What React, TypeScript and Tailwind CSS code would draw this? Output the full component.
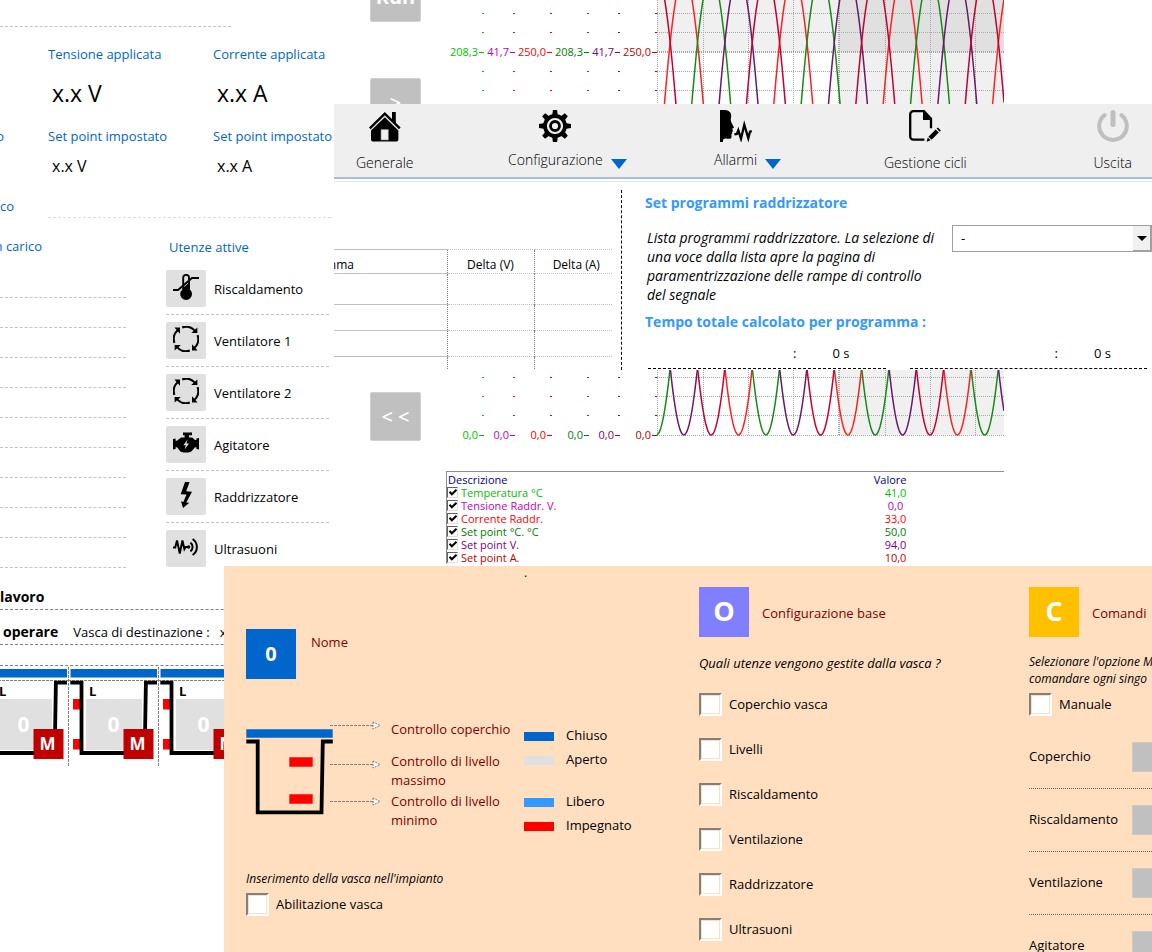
import type { ReactNode } from 'react'

/* ---------- icons ---------- */

function ThermometerIcon() {
  return (
    <svg width="26" height="26" viewBox="0 0 26 26">
      <path d="M10.2 15V3.8a2.8 2.8 0 0 1 5.8 0V15" fill="none" stroke="#000" strokeWidth="1.9" />
      <path d="M9.4 14.5 16.8 8v7.4a5.9 5.9 0 1 1-7.4 0z" />
      <path d="M0 16h5L19 4h7" fill="none" stroke="#000" strokeWidth="1.9" />
    </svg>
  )
}

function FanIcon() {
  return (
    <svg width="26" height="26" viewBox="0 0 26 26">
      {[0, 90, 180, 270].map((angle) => (
        <g key={angle} transform={`rotate(${angle} 13 13)`}>
          <path d="M9.2 1.4a12 12 0 0 1 12.6 3.2" fill="none" stroke="#000" strokeWidth="2.1" />
          <path d="M24.4 1.4v5.6h-6.2z" />
        </g>
      ))}
    </svg>
  )
}

function EngineIcon() {
  return (
    <svg width="26" height="26" viewBox="0 0 26 26">
      <path d="M10 2.5h9v2.8h-3v2.2h3.2l2.8 2.6h1.4V8.5L26 8v11.5l-2.6-.6v-1.6H22l-3.6 4.2-3 1h-5l-3-1L4 17.3H2.6v1.6L0 19.5V9l2.6-.5v2.2H4l4-3.2h3.6V5.3H10z" />
      <path d="m14.6 9.6-4.2 5.6h2.4l-1.2 4.2 4.4-5.8h-2.5z" fill="#e0e0e0" />
    </svg>
  )
}

function BoltIcon() {
  return (
    <svg width="26" height="26" viewBox="0 0 26 26">
      <path d="M12 0h4.6L13.2 9.3l5.8.4-5.7 10.7 3 .3L10 26 8 19.3l2.3.7 3.2-7.4-5.8-.4z" />
    </svg>
  )
}

function UltrasoundIcon() {
  return (
    <svg width="26" height="26" viewBox="0 0 26 26" fill="none" stroke="#000" strokeWidth="2">
      <path d="M0 13.5h2.2L4 6.5l2.8 13 2.6-13 2 8.5 1.2-2h3.2" />
      <circle cx="15.6" cy="13" r="1.7" fill="#000" stroke="none" />
      <path d="M17.4 8.6a5.5 5.5 0 0 1 0 8.8" />
      <path d="M19.6 5a9.6 9.6 0 0 1 0 16" />
    </svg>
  )
}

function HouseIcon() {
  return (
    <svg width="32" height="32" viewBox="0 0 32 32">
      <path d="M23 2h3.8v13L23 11z" />
      <path d="M.8 18.3 15.8 3.6l15 14.7" fill="none" stroke="#000" strokeWidth="2.4" />
      <path d="M15.8 7.2 29.4 20.4V29a2.6 2.6 0 0 1-2.6 2.6H4.6A2.6 2.6 0 0 1 2 29v-8.6z" />
      <path d="M12 19.5h7.4V30H12z" fill="#efefef" stroke="#888" strokeWidth="0.6" />
    </svg>
  )
}

function GearIcon() {
  return (
    <svg width="32" height="32" viewBox="0 0 32 32">
      {[0, 45, 90, 135, 180, 225, 270, 315].map((angle) => (
        <path key={angle} d="M13.9 0h4.2l.8 6h-5.8z" transform={`rotate(${angle} 16 16)`} />
      ))}
      <circle cx="16" cy="16" r="10" fill="none" stroke="#000" strokeWidth="3.8" />
      <circle cx="16" cy="16" r="4.5" fill="none" stroke="#000" strokeWidth="2.8" />
    </svg>
  )
}

function VoiceIcon() {
  return (
    <svg width="32" height="32" viewBox="0 0 32 32">
      <path d="M0 0h4.5c3.6.2 6 1.4 6.6 4.6.4 2-.6 3.8-.3 6 .2 1.6 1.4 3.8 3 6.4.3.7-.4 1.3-1.6 1.6l.8 2.6-1.2.8.6 1.2-1 .9.1 2.6c-.1 2-1.6 2.4-4.4 2-2-.3-3.6.2-4 1.4L2.8 32H0z" />
      <path d="m14.4 24.4 2.5-.5 1.4-3.6 2.7 8.4 3.3-14 4 13.6 1.7-6.6 1.8-.6" fill="none" stroke="#000" strokeWidth="2.3" />
    </svg>
  )
}

function CycleFileIcon() {
  return (
    <svg width="32" height="32" viewBox="0 0 32 32">
      <path d="M15.4 29.7H4.4A3.2 3.2 0 0 1 1.2 26.5V4.4a3.2 3.2 0 0 1 3.2-3.2H15l7 7.4v9.6" fill="none" stroke="#000" strokeWidth="2.3" />
      <path d="M14 .8 23 10h-9z" />
      <path d="m27.6 18.6 1.3-1.1 3 3-1.2 1.2zM26.7 19.6l3.1 3-7.2 7.1-3.2-3zM18.8 27.5l2.8 2.8-4 1.5z" />
    </svg>
  )
}

function PowerIcon() {
  return (
    <svg width="32" height="32" viewBox="0 0 32 32" fill="none" stroke="#bfbfbf" strokeLinecap="round">
      <path d="M7.6 5.2a13.8 13.8 0 1 0 16.8 0" strokeWidth="4" />
      <path d="M16 2.6v12" strokeWidth="5" />
    </svg>
  )
}

function ArrowDown() {
  return (
    <svg width="16" height="10" viewBox="0 0 16 10">
      <path d="M0 0h16L8 10z" fill="#0066cc" />
    </svg>
  )
}

/* ---------- plant overview (left) ---------- */

const utilities = [
  { label: 'Riscaldamento', icon: <ThermometerIcon /> },
  { label: 'Ventilatore 1', icon: <FanIcon /> },
  { label: 'Ventilatore 2', icon: <FanIcon /> },
  { label: 'Agitatore', icon: <EngineIcon /> },
  { label: 'Raddrizzatore', icon: <BoltIcon /> },
  { label: 'Ultrasuoni', icon: <UltrasoundIcon /> },
]

function Measure({ title, unit }: { title: string; unit: string }) {
  return (
    <div className="w-[165px] shrink-0 pt-[17px] whitespace-nowrap">
      <div className="leading-5 text-[#0066cc]">{title}</div>
      <div className="mt-[13px] pl-1 text-[23px] leading-8">x.x {unit}</div>
      <div className="mt-[17px] leading-5 text-[#0066cc]">Set point impostato</div>
      <div className="mt-2.5 pl-1 text-base leading-5">x.x {unit}</div>
    </div>
  )
}

function MiniTank() {
  return (
    <svg className="shrink-0" width="90" height="100" viewBox="0 0 90 100">
      <path d="M0 14.5h90" stroke="#808080" strokeDasharray="3 1" />
      <path d="M.5 1v99" stroke="#808080" strokeDasharray="3 1" />
      <path d="M2.5 3h86.5v8.5H2.5z" fill="#0066cc" />
      <path d="M5 33h7v10.5H5zM5 73h7v10.5H5z" fill="#ff0000" />
      <path d="M18 33h56v51H18z" fill="#e0e0e0" />
      <path d="M2.3 16.6h11.2V87h63.2l1.2-70.4H89" fill="none" stroke="#000" strokeWidth="3.8" />
      <text x="21" y="30" fontSize="13" fontWeight="700">L</text>
      <text x="45.5" y="66" fontSize="21" fontWeight="700" fill="#fff" textAnchor="middle">0</text>
      <path d="M55.5 63h30v30h-30z" fill="#c00000" />
      <text x="69.5" y="84" fontSize="17" fontWeight="700" fill="#fff" textAnchor="middle">M</text>
    </svg>
  )
}

function OverviewWindow() {
  return (
    <section className="absolute left-0 top-0 bottom-0 w-[334px] overflow-hidden bg-white">
      <div className="h-[27px] w-[231px] border-b border-dashed border-[#c4c4c4]" />

      <div className="flex h-[191px]">
        <div className="w-12 shrink-0 text-[#0066cc] leading-5">
          <div className="w-1 pt-[99px] flex justify-end">o</div>
          <div className="pt-[50px]">co</div>
        </div>
        <div className="flex w-[283px] border-b border-dashed border-[#dcdcdc]">
          <Measure title="Tensione applicata" unit="V" />
          <Measure title="Corrente applicata" unit="A" />
        </div>
      </div>

      <div className="flex h-[350px] gap-10">
        <div className="w-[126px] pt-[18px]">
          <div className="flex w-[42px] justify-end whitespace-nowrap leading-5 text-[#0066cc]">n carico</div>
          <div className="h-[42px] border-b border-dashed border-[#c4c4c4]" />
          {Array.from({ length: 9 }, (_, i) => (
            <div key={i} className="h-[30px] border-b border-dashed border-[#c4c4c4]" />
          ))}
        </div>
        <div className="w-[163px] pt-[19px]">
          <h2 className="pl-[3px] leading-5 text-[#0066cc]">Utenze attive</h2>
          <ul className="pt-1.5">
            {utilities.map((u) => (
              <li key={u.label} className="group flex h-[52px] flex-col pt-[7px]">
                <div className="flex items-center gap-2">
                  <span className="flex h-[37px] w-10 items-center justify-center rounded-xs bg-[#e0e0e0] pb-1">{u.icon}</span>
                  <span className="pt-0.5">{u.label}</span>
                </div>
                <div className="mt-[7px] border-b border-dashed border-[#c4c4c4] group-last:hidden" />
              </li>
            ))}
          </ul>
        </div>
      </div>

      <div className="flex h-[42px] items-end border-b border-dashed border-[#808080] pb-0.5 text-sm font-bold leading-5">
        lavoro
      </div>
      <div className="flex h-[35px] items-end border-b border-dashed border-[#808080] pb-0.5 pl-[3px] leading-5">
        <b className="text-sm leading-5">operare</b>
        <span className="ml-[15px]">Vasca di destinazione :</span>
        <span className="ml-2.5">x</span>
      </div>
      <div className="h-[21px] border-b border-dashed border-[#808080]" />
      <div className="flex w-[248px] justify-end">
        <MiniTank />
        <MiniTank />
        <MiniTank />
      </div>
    </section>
  )
}

/* ---------- trend (top right) ---------- */

const series = [
  { name: 'Temperatura °C', value: '41,0', max: '208,3', axis: 38, color: '#00c000' },
  { name: 'Tensione Raddr. V.', value: '0,0', max: '41,7', axis: 69, color: '#c000c0' },
  { name: 'Corrente Raddr.', value: '33,0', max: '250,0', axis: 106, color: '#ff0000' },
  { name: 'Set point °C. °C', value: '50,0', max: '208,3', axis: 143, color: '#008000' },
  { name: 'Set point V.', value: '94,0', max: '41,7', axis: 174, color: '#800080' },
  { name: 'Set point A.', value: '10,0', max: '250,0', axis: 211, color: '#c00000' },
]

const PLOT_LEFT = 211
const PLOT_RIGHT = 558
const BASELINE = 435
const AMPLITUDE = 230
const PHASE = 27.35

const waves = [
  { color: '#ff2020', offset: 3 },
  { color: '#158a15', offset: 0 },
  { color: '#6a1868', offset: 1 },
  { color: '#c40030', offset: 2 },
]

function wavePoints(offset: number) {
  const points: string[] = []
  for (let x = PLOT_LEFT; x <= PLOT_RIGHT; x++) {
    const angle = ((x - PLOT_LEFT - offset * PHASE + 0.5) / (PHASE * 4)) * Math.PI * 2
    points.push(`${x},${(BASELINE - AMPLITUDE * (1 - Math.cos(angle))).toFixed(1)}`)
  }
  return points.join(' ')
}

// 20 divisions between 0 and the full scale, the two labelled ones left out
const minorTicks = Array.from({ length: 23 }, (_, i) => i)
  .filter((i) => i % 20 !== 0)
  .map((i) => Math.floor(434.9 - i * 19.15))

function TrendChart() {
  return (
    <svg width="558" height="441" viewBox="0 0 558 441">
      <path d="M211 0h182v52H211z" fill="#f0f0f0" />
      <path d="M393 0h165v52H393z" fill="#e0e0e0" />
      <path d="M393 52h165v383H393z" fill="#f0f0f0" />
      <g stroke="#a8a8a8" strokeDasharray="1 1">
        {[211.5, 257.5, 302.5, 347.5, 392.5, 393.5, 439.5, 484.5, 529.5].map((x) => (
          <path key={x} d={`M${x} 0V435`} />
        ))}
        {[...minorTicks, 51, 52, 435].map((y) => (
          <path key={y} d={`M211 ${y}.5H558`} />
        ))}
      </g>
      {waves.map((w) => (
        <polyline key={w.color} points={wavePoints(w.offset)} fill="none" stroke={w.color} strokeWidth="1.5" />
      ))}
      {series.map((s) => (
        <g key={s.name} fill={s.color} fontSize="11" textAnchor="end">
          {minorTicks.map((y) => (
            <path key={y} d={`M${s.axis - 2} ${y}h2v1h-2z`} />
          ))}
          <path d={`M${s.axis - 5} 52h5v1h-5zM${s.axis - 5} 435h5v1h-5z`} />
          <text x={s.axis - 6} y="56">{s.max}</text>
          <text x={s.axis - 6} y="439">0,0</text>
        </g>
      ))}
    </svg>
  )
}

function Legend() {
  return (
    <table className="mt-[30px] w-full border-collapse border-l border-t border-[#909090] text-[11px] leading-[13px]">
      <thead>
        <tr className="text-[#000080]">
          <th className="w-[420px] p-0 pt-px pl-px text-left font-normal">Descrizione</th>
          <th className="w-[40px] p-0 pt-px text-right font-normal">Valore</th>
          <th />
        </tr>
      </thead>
      <tbody>
        {series.map((s) => (
          <tr key={s.name} style={{ color: s.color }}>
            <td className="p-0">
              <label className="relative flex h-[13px] items-center gap-[3px]">
                <input
                  type="checkbox"
                  defaultChecked
                  className="peer size-[11px] appearance-none border border-[#e0e0e0] border-l-[#606060] border-t-[#606060] bg-white"
                />
                <svg className="invisible absolute left-0.5 top-[3px] peer-checked:visible" width="8" height="7" viewBox="0 0 8 7">
                  <path d="m.5 2.8 2.3 2.5L7.5.8" fill="none" stroke="#000" strokeWidth="2" />
                </svg>
                {s.name}
              </label>
            </td>
            <td className="p-0">
              <span className="ml-auto block w-[22px] text-center">{s.value}</span>
            </td>
            <td />
          </tr>
        ))}
      </tbody>
    </table>
  )
}

function TrendWindow() {
  const button = 'h-[49px] w-[51px] rounded-xs bg-[#c0c0c0] border border-[#d0d0d0] text-white text-xl'
  return (
    <section className="absolute left-[334px] right-0 top-0 flex h-[566px] overflow-hidden bg-white pl-9">
      <div className="-mt-[27px] flex w-[51px] flex-col">
        <button className={`${button} pb-0.5 font-bold`}>Run</button>
        <button className={`${button} mt-14 font-semibold`}>&gt;</button>
        <button className={`${button} mt-[265px] font-semibold`}>&lt; &lt;</button>
      </div>
      <div className="ml-[25px] w-[558px]">
        <TrendChart />
        <Legend />
      </div>
    </section>
  )
}

/* ---------- rectifier programs (centre) ---------- */

function NavItem({ icon, label, menu }: { icon: ReactNode; label: string; menu?: boolean }) {
  if (menu) {
    return (
      <button className="flex items-start gap-2">
        <span className="flex flex-col items-center gap-2">
          {icon}
          <span className="text-sm font-light leading-5">{label}</span>
        </span>
        <span className="pt-[49px]">
          <ArrowDown />
        </span>
      </button>
    )
  }
  return (
    <button className="flex flex-col items-center gap-[11px]">
      {icon}
      <span className="text-sm font-light leading-5">{label}</span>
    </button>
  )
}

function TimeSlot() {
  return (
    <div className="flex flex-1 justify-end gap-9 border-b border-dashed border-black pb-[5px] pr-9 leading-5">
      <span>:</span>
      <span>0 s</span>
    </div>
  )
}

function ProgramsWindow() {
  const cell = 'border-t border-[#c0c0c0] p-0'
  const dotted = 'border-t border-t-[#c0c0c0] border-l border-dotted border-l-[#808080] p-0'
  return (
    <section className="absolute left-[334px] right-0 top-[104px] h-[266px] overflow-hidden bg-white">
      <nav className="grid h-[75px] grid-cols-[152px_206px_170px_1fr_auto] items-start justify-items-start border-b-2 border-[#a9bdd3] bg-[#efefef] pl-[22px] pr-5 pt-1.5">
        <NavItem icon={<HouseIcon />} label="Generale" />
        <NavItem icon={<GearIcon />} label="Configurazione" menu />
        <NavItem icon={<VoiceIcon />} label="Allarmi" menu />
        <NavItem icon={<CycleFileIcon />} label="Gestione cicli" />
        <NavItem icon={<PowerIcon />} label="Uscita" />
      </nav>
      <div className="h-[3px] border-b border-[#dfe8f0]" />

      <div className="flex">
        <div className="mt-[67px] w-[278px] shrink-0">
          <table className="w-full table-fixed border-collapse text-xs">
            <thead>
              <tr className="h-6">
                <th className={`w-[113px] text-left font-normal ${cell}`}>
                  <span className="flex w-5 justify-end pt-1.5">mma</span>
                </th>
                <th className={`w-[87px] font-normal ${dotted}`}>
                  <span className="block pt-1.5">Delta (V)</span>
                </th>
                <th className={`font-normal ${dotted}`}>
                  <span className="block pt-1.5 pl-1.5">Delta (A)</span>
                </th>
              </tr>
            </thead>
            <tbody>
              {['h-[31px]', 'h-[26px]', 'h-[26px]', 'h-[14px]'].map((height, i) => (
                <tr key={i} className={height}>
                  <td className={cell} />
                  <td className={dotted} />
                  <td className={dotted} />
                </tr>
              ))}
            </tbody>
          </table>
        </div>

        <div className="ml-[9px] mt-2 h-[180px] border-l border-dashed border-black" />

        <div className="flex-1 pl-[23px] pt-[11px]">
          <h2 className="text-sm font-bold leading-5 text-[#3399ff]">Set programmi raddrizzatore</h2>
          <div className="mt-3 flex items-start justify-between">
            <p className="whitespace-nowrap pl-0.5 pt-[3px] text-sm italic leading-[19px]">
              Lista programmi raddrizzatore. La selezione di
              <br />
              una voce dalla lista apre la pagina di
              <br />
              paramentrizzazione delle rampe di controllo
              <br />
              del segnale
            </p>
            <div className="relative">
              <select aria-label="Programma" className="h-[27px] w-[200px] appearance-none border border-[#a0a0a0] bg-white pl-2">
                <option>-</option>
              </select>
              <span className="pointer-events-none absolute inset-y-px right-px flex w-[18px] items-center justify-center border-b border-r border-[#a0a0a0] bg-[#f0f0f0]">
                <svg width="10" height="5" viewBox="0 0 10 5">
                  <path d="M0 0h10L5 5z" />
                </svg>
              </span>
            </div>
          </div>
          <h2 className="mt-2 text-sm font-bold leading-5 text-[#3399ff]">Tempo totale calcolato per programma :</h2>
          <div className="mt-[11px] flex gap-6 pl-[3px] pr-[5px]">
            <TimeSlot />
            <TimeSlot />
          </div>
        </div>
      </div>
    </section>
  )
}

/* ---------- tank configuration (bottom right) ---------- */

function Tile({ letter, className }: { letter: string; className: string }) {
  return (
    <div className={`flex size-[50px] items-center justify-center font-bold text-white ${className}`}>{letter}</div>
  )
}

function Check({ label }: { label: string }) {
  return (
    <label className="flex items-center gap-[7px]">
      <input
        type="checkbox"
        className="size-[23px] appearance-none border-2 border-b-white border-l-[#808080] border-r-white border-t-[#808080] bg-white shadow-[inset_0_0_0_1px_#ffdfbf] checked:bg-[#404040]"
      />
      {label}
    </label>
  )
}

function TankDiagram() {
  return (
    <svg width="137" height="100" viewBox="0 0 137 100">
      <path d="M.3 10.3h86.4v8.4H.3z" fill="#0066cc" />
      <path d="M.3 22.5h11.4v70.8h63.8l1.3-70.8h10" fill="none" stroke="#000" strokeWidth="3.8" />
      <path d="M43.3 38.3h23.4v9.4H43.3zM43.3 75.3h23.4v9.4H43.3z" fill="#ff0000" />
      {[6.5, 45.5, 82.5].map((y) => (
        <g key={y} stroke="#808080">
          <path d={`M84 ${y}h43`} strokeDasharray="3 1" />
          <path d={`M127 ${y - 3.5}v7l7-3.5z`} fill="#fff" strokeDasharray="2 1" />
        </g>
      ))}
    </svg>
  )
}

function Swatch({ label, className }: { label: string; className: string }) {
  return (
    <li className="flex h-6 items-center gap-3">
      <span className={`h-[9px] w-[30px] ${className}`} />
      {label}
    </li>
  )
}

const tankChecks = ['Coperchio vasca', 'Livelli', 'Riscaldamento', 'Ventilazione', 'Raddrizzatore', 'Ultrasuoni']
const commands = ['Coperchio', 'Riscaldamento', 'Ventilazione', 'Agitatore']

function ConfigWindow() {
  return (
    <section className="absolute bottom-0 left-[224px] right-0 top-[566px] flex overflow-hidden bg-[#ffdfc0] pl-[22px]">
      <div className="w-[453px] shrink-0">
        <div className="h-[63px] pl-[278px] text-xs leading-[14px]">.</div>
        <div className="flex gap-[15px]">
          <Tile letter="0" className="bg-[#0066cc] text-xl" />
          <div className="pt-1 leading-[18px] text-[#800000]">Nome</div>
        </div>

        <div className="mt-10 flex">
          <TankDiagram />
          <div className="ml-2 w-[133px] leading-[19px] text-[#800000]">
            <p className="pt-px">Controllo coperchio</p>
            <p className="mt-[13px]">Controllo di livello<br />massimo</p>
            <p className="mt-0.5">Controllo di livello<br />minimo</p>
          </div>
          <ul className="pt-[5px]">
            <Swatch label="Chiuso" className="bg-[#0066cc]" />
            <Swatch label="Aperto" className="bg-[#e0e0e0]" />
            <li className="h-[18px]" />
            <Swatch label="Libero" className="bg-[#3399ff]" />
            <Swatch label="Impegnato" className="bg-[#ff0000]" />
          </ul>
        </div>

        <p className="mt-8 mb-[5px] text-xs italic leading-[18px]">Inserimento della vasca nell'impianto</p>
        <Check label="Abilitazione vasca" />
      </div>

      <div className="w-[330px] shrink-0 pt-[21px]">
        <div className="flex items-center gap-[13px]">
          <Tile letter="O" className="bg-[#8080ff] pb-0.5 text-[27px]" />
          <h2 className="pt-1 text-[#800000]">Configurazione base</h2>
        </div>
        <p className="mt-[17px] mb-[21px] italic leading-[18px]">Quali utenze vengono gestite dalla vasca ?</p>
        <div className="flex flex-col gap-[22px]">
          {tankChecks.map((label) => (
            <Check key={label} label={label} />
          ))}
        </div>
      </div>

      <div className="min-w-0 flex-1 pt-[21px]">
        <div className="flex items-center gap-[13px]">
          <Tile letter="C" className="bg-[#ffc000] pb-0.5 text-[27px]" />
          <h2 className="pt-1 text-[#800000]">Comandi</h2>
        </div>
        <p className="mt-4 mb-1.5 whitespace-nowrap text-xs italic leading-[17px]">
          Selezionare l'opzione M
          <br />
          comandare ogni singo
        </p>
        <Check label="Manuale" />
        <ul className="mt-2.5">
          {commands.map((name) => (
            <li key={name} className="flex items-center border-b border-dotted border-[#806050] py-4">
              <span className="w-[103px] shrink-0">{name}</span>
              <button aria-label={name} className="h-[30px] w-[50px] shrink-0 border border-[#d0c8c0] bg-[#c0c0c0]" />
            </li>
          ))}
        </ul>
      </div>
    </section>
  )
}

export default function App() {
  return (
    <main className="relative min-h-screen overflow-hidden bg-white font-['Open_Sans','Noto_Sans',sans-serif] text-[13px] text-black">
      <OverviewWindow />
      <TrendWindow />
      <ProgramsWindow />
      <ConfigWindow />
    </main>
  )
}
